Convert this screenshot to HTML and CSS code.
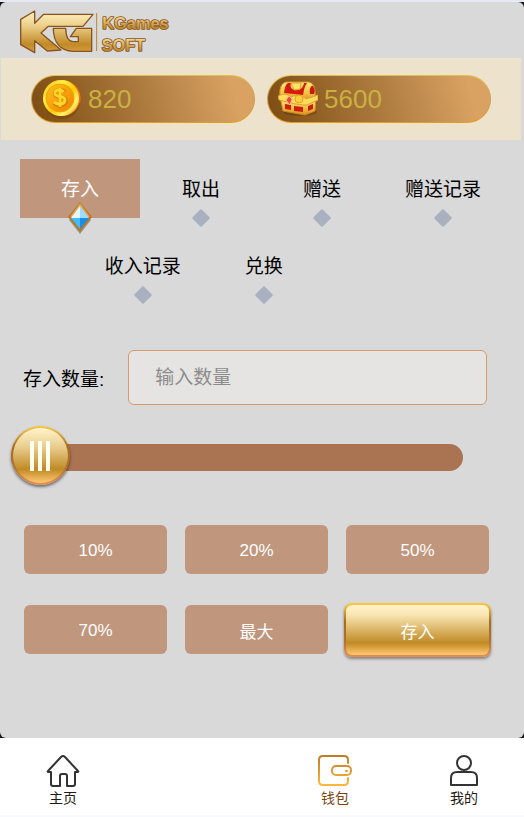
FILE: index.html
```
<!DOCTYPE html>
<html lang="zh-CN">
  <head>
    <meta charset="UTF-8" />
    <meta name="viewport" content="width=device-width, initial-scale=1.0" />
    <title>钱包</title>
    <link rel="stylesheet" href="styles.css">
  </head>
  <body>
    <div class="frame">
      <main class="wallet">
        <header class="header">
          <svg class="logo" viewBox="60 30 450 132" role="img" aria-label="KGames SOFT">
            <defs>
              <linearGradient id="gold" x1="0" y1="33" x2="0" y2="158" gradientUnits="userSpaceOnUse">
                <stop offset="0" stop-color="#fff2c4" />
                <stop offset="0.35" stop-color="#ecd08a" />
                <stop offset="0.8" stop-color="#c08a27" />
                <stop offset="1" stop-color="#d89e3e" />
              </linearGradient>
              <linearGradient id="goldText" x1="0" y1="0" x2="0" y2="1">
                <stop offset="0.2" stop-color="#f0d48c" />
                <stop offset="0.8" stop-color="#c08a2c" />
              </linearGradient>
            </defs>
            <g fill="url(#gold)" stroke="#8a5420" stroke-width="4" stroke-linejoin="round">
              <path d="M62 58 L104 33 V70 L131 43 H279 L249 79 H145 L123 99 L183 150 L142 153 L104 122 V158 L62 134 Z" />
              <path d="M160 85 H197 C198 110 205 125 219 125 H235 V110 H211 L229 85 H275 V154 H219 C180 152 160 126 160 85 Z" />
            </g>
            <path d="M290 39 V153" stroke="#b98432" stroke-width="3" />
            <g class="logo-text">
              <text x="307" y="86">KGames</text>
              <text x="305" y="152">SOFT</text>
            </g>
          </svg>
        </header>

        <section class="balances">
          <div class="balance">
            <svg class="balance-icon" viewBox="0 0 40 40" aria-hidden="true">
              <defs>
                <linearGradient id="coinRim" x1="0" y1="0" x2="1" y2="1">
                  <stop offset="0" stop-color="#ffb400" />
                  <stop offset="0.3" stop-color="#fff04a" />
                  <stop offset="0.55" stop-color="#ffcb00" />
                  <stop offset="0.75" stop-color="#fff36a" />
                  <stop offset="1" stop-color="#f58a00" />
                </linearGradient>
                <linearGradient id="coinFace" x1="0" y1="0" x2="1" y2="1">
                  <stop offset="0" stop-color="#ffc21a" />
                  <stop offset="1" stop-color="#ec8200" />
                </linearGradient>
              </defs>
              <ellipse cx="20" cy="22" rx="18" ry="18" fill="#6b3c08" opacity="0.4" />
              <circle cx="20" cy="19" r="18" fill="#f08000" />
              <path d="M33 8 A18 18 0 0 1 37 24" fill="none" stroke="#ff6a1a" stroke-width="2" />
              <circle cx="19" cy="19" r="18" fill="url(#coinRim)" />
              <circle cx="18" cy="19" r="14" fill="url(#coinFace)" stroke="#f5a100" />
              <path d="M23 13 C20 10 12 10 13 15 C14 20 24 16 24 22 C24 27 15 27 12 24 M18 9 V29" fill="none" stroke="#d97a00" stroke-width="4" />
              <path d="M22 13 C19 10 12 10 13 15 C14 19 23 16 23 21 C23 26 15 26 12 23 M18 9 V28" fill="none" stroke="#ffd62a" stroke-width="3" />
            </svg>
            <span>820</span>
          </div>
          <div class="balance">
            <svg class="balance-icon" viewBox="0 0 40 40" aria-hidden="true">
              <defs>
                <linearGradient id="chest" x1="0" y1="0" x2="0" y2="1">
                  <stop offset="0" stop-color="#ffeb7a" />
                  <stop offset="0.6" stop-color="#f6c043" />
                  <stop offset="1" stop-color="#dc8d18" />
                </linearGradient>
              </defs>
              <ellipse cx="22" cy="33" rx="17" ry="4" fill="#5a3206" opacity="0.4" />
              <path d="M2 18 L38 18 L37 32 L27 36 L5 32 Z" fill="url(#chest)" stroke="#c98a24" />
              <path d="M7 25 L13 26 V31 L7 30 Z M16 27 L25 28 V33 L16 32 Z M30 27 L35 25 V30 L30 32 Z" fill="#c9200e" />
              <path d="M2 18 C1 10 3 4 8 3 L31 3 C36 4 38 11 37 18 L28 22 Z" fill="url(#chest)" stroke="#c98a24" />
              <path d="M10 4 L13 4 C12 8 13 10 17 11 C22 12 25 9 26 4 L29 4 C26 8 26 12 25 16 L6 14 C7 9 7 6 10 4 Z" fill="#d41c0e" />
              <path d="M32 15 C31 10 33 6 35 7 C37 10 37 13 36 15 Z" fill="#c91a0e" />
              <path d="M13 4 L23 4 L22 10 L16 11 Z" fill="#ffe46a" stroke="#e0a02a" />
              <path d="M0 17 C7 14 9 15 13 18 C19 15 25 17 28 20 L40 16 V21 L29 26 C22 26 18 25 13 24 L1 21 Z" fill="#ffdc5c" stroke="#dba038" />
              <circle cx="21" cy="20" r="4" fill="#fbd03e" stroke="#e7a127" />
              <path d="M11 17 L14 20 L12 26 L8 21 Z" fill="#f04432" stroke="#ffb68a" />
            </svg>
            <span>5600</span>
          </div>
        </section>

        <nav class="tabs">
          <div class="tab-row">
            <button type="button" class="tab active">
              存入
              <svg class="gem" viewBox="0 0 24 32" aria-hidden="true">
                <path d="M12 6 L23 18 L12 32 L1 18 Z" fill="#000" opacity="0.3" />
                <path d="M12 0 L24 15 L12 30 L0 15 Z" fill="#b97820" />
                <path d="M12 1 L22 15 H2 Z" fill="#e0a650" />
                <path d="M12 4 L12 16 H3 Z" fill="#e4f6ff" />
                <path d="M12 4 L21 16 H12 Z" fill="#9edbff" />
                <path d="M3 16 H12 V27 Z" fill="#40bcfa" />
                <path d="M12 16 H21 L12 27 Z" fill="#188fe8" />
              </svg>
            </button>
            <button type="button" class="tab">取出</button>
            <button type="button" class="tab">赠送</button>
            <button type="button" class="tab">赠送记录</button>
          </div>
          <div class="tab-row second">
            <button type="button" class="tab">收入记录</button>
            <button type="button" class="tab">兑换</button>
          </div>
        </nav>

        <form class="deposit">
          <div class="amount-row">
            <label for="amount">存入数量:</label>
            <input type="text" id="amount" class="amount-input" placeholder="输入数量" />
          </div>
          <input type="range" id="slider" class="slider" min="0" max="100" value="0" aria-label="存入数量" />
          <div class="options">
            <button type="button" class="btn" data-percent="10">10%</button>
            <button type="button" class="btn" data-percent="20">20%</button>
            <button type="button" class="btn" data-percent="50">50%</button>
            <button type="button" class="btn" data-percent="70">70%</button>
            <button type="button" class="btn" data-percent="100">最大</button>
            <button type="submit" class="btn btn-submit">存入</button>
          </div>
        </form>
      </main>
    </div>

    <nav class="bottom-nav">
      <a href="#home" class="nav-item">
        <svg viewBox="0 0 36 36" aria-hidden="true">
          <path d="M3 18 L16 4 Q18 2 20 4 L33 18 Q34 19 32 19 H30 V31 Q30 33 28 33 H22 V23 Q22 21 20 21 H17 Q15 21 15 23 V33 H8 Q6 33 6 31 V19 H4 Q2 19 3 18 Z" />
        </svg>
        <span>主页</span>
      </a>
      <a href="#wallet" class="nav-item current">
        <svg viewBox="0 0 36 36" aria-hidden="true">
          <defs>
            <linearGradient id="walletLine" x1="0" y1="2" x2="0" y2="32" gradientUnits="userSpaceOnUse">
              <stop offset="0" stop-color="#bd7a28" />
              <stop offset="1" stop-color="#fdb83a" />
            </linearGradient>
          </defs>
          <path d="M31 10 V7 Q31 3 27 3 H6 Q2 3 2 7 V28 Q2 32 6 32 H27 Q31 32 31 28 V25" />
          <rect x="15" y="13" width="19" height="9" rx="4" />
          <path d="M29 18 H30" />
        </svg>
        <span>钱包</span>
      </a>
      <a href="#mine" class="nav-item">
        <svg viewBox="0 0 36 36" aria-hidden="true">
          <circle cx="18" cy="10" r="7" />
          <path d="M5 32 V25 Q5 19 11 19 H25 Q31 19 31 25 V32 Z" />
        </svg>
        <span>我的</span>
      </a>
    </nav>

    <script>
      const slider = document.getElementById("slider");
      const amount = document.getElementById("amount");
      const balance = 820;

      function setPercent(percent) {
        slider.value = percent;
        amount.value = Math.floor((balance * percent) / 100);
      }

      slider.addEventListener("input", () => setPercent(slider.value));

      document.querySelectorAll("[data-percent]").forEach((btn) => {
        btn.addEventListener("click", () => setPercent(btn.dataset.percent));
      });

      document.querySelector(".deposit").addEventListener("submit", (e) => {
        e.preventDefault();
      });
    </script>
  </body>
</html>
```
FILE: styles.css
```
* {
  box-sizing: border-box;
}

body {
  margin: 0;
  min-height: 100vh;
  display: flex;
  flex-direction: column;
  font-family: "Liberation Sans", "Noto Sans CJK SC", sans-serif;
  font-size: 19px;
  color: #000;
  background-color: #f8f9fd;
}

button,
input {
  font-family: inherit;
}

.frame {
  flex: 1;
  display: flex;
  border-top: 2px solid #e4e9f3;
  background-color: #18131a;
}

.wallet {
  flex: 1;
  min-width: 0;
  background-color: #d9d9d9;
  border-radius: 6px;
}

.header {
  height: 56px;
  padding: 8px 20px;
}

.logo {
  display: block;
  width: 150px;
  height: 44px;
}

.logo-text {
  font-size: 49px;
  font-weight: bold;
  fill: url(#goldText);
  stroke: #8a5420;
  stroke-width: 5px;
  stroke-linejoin: round;
  paint-order: stroke;
}

/* balances */
.balances {
  display: flex;
  gap: 12px;
  margin: 0 3px 0 1px;
  padding: 17px 30px;
  background-color: #ede2cb;
}

.balance {
  flex: 1;
  display: flex;
  align-items: center;
  gap: 6px;
  height: 48px;
  padding: 0 10px;
  border: 1px solid transparent;
  border-radius: 24px;
  background:
    linear-gradient(75deg, #7d4c12, #a8763a 45%, #d9a263 90%) padding-box,
    linear-gradient(#e3c04a, #c79a55 50%, #e8a014) border-box;
  color: #c9b141;
  font-size: 26px;
}

.balance-icon {
  width: 40px;
  height: 40px;
}

/* tabs */
.tabs {
  display: flex;
  flex-direction: column;
  gap: 18px;
  padding: 19px 21px 0 20px;
}

.tab-row {
  display: flex;
  gap: 1px;
}

.tab-row.second {
  padding-left: 13%;
}

.tab {
  position: relative;
  width: 25%;
  height: 59px;
  padding: 0 0 2px;
  border: none;
  background: none;
  color: #000;
  font-size: 19px;
  cursor: pointer;
}

.tab::after {
  content: "";
  position: absolute;
  left: 50%;
  bottom: 0;
  width: 13px;
  height: 13px;
  background-color: #a9b1c1;
  border-radius: 1px;
  transform: translate(-50%, 50%) rotate(45deg);
}

.tab-row.second .tab {
  width: 120px;
}

.tab.active {
  background-color: #c0967c;
  color: #fff;
}

.tab.active::after {
  display: none;
}

.gem {
  position: absolute;
  left: 50%;
  bottom: 0;
  width: 24px;
  height: 32px;
  transform: translate(-50%, 50%);
}

/* deposit form */
.deposit {
  padding: 55px 35px 0 23px;
}

.amount-row {
  display: flex;
  align-items: center;
  gap: 24px;
  padding-right: 2px;
}

.amount-input {
  flex: 1;
  min-width: 0;
  height: 55px;
  padding: 0 26px;
  border: 1px solid #d39b70;
  border-radius: 6px;
  background-color: #e5e4e2;
  font-size: 19px;
  outline: none;
}

.amount-input::placeholder {
  color: #8c8c8c;
}

.slider {
  -webkit-appearance: none;
  appearance: none;
  display: block;
  width: calc(100% - 14px);
  height: 60px;
  margin: 22px 0 0 -12px;
  background: none;
  cursor: pointer;
}

.slider::-webkit-slider-runnable-track {
  height: 27px;
  border-radius: 14px;
  background-color: #aa7453;
}

.slider::-webkit-slider-thumb {
  -webkit-appearance: none;
  width: 59px;
  height: 59px;
  margin-top: -18px;
  border: 2px solid transparent;
  border-radius: 50%;
  background:
    linear-gradient(#fffef0, #fffef0) 17px 13px / 4px 30px no-repeat padding-box,
    linear-gradient(#fffef0, #fffef0) 25px 13px / 4px 30px no-repeat padding-box,
    linear-gradient(#fffef0, #fffef0) 33px 13px / 4px 30px no-repeat padding-box,
    linear-gradient(#fff4cc, #e8cd8d 35%, #c08a24 75%, #ffc871) padding-box,
    linear-gradient(#ffc845, #a66c1c 35%, #b5702c 70%, #e58d55) border-box;
  box-shadow: 0 2px 3px rgba(0, 0, 0, 0.5);
}

.options {
  display: grid;
  grid-template-columns: repeat(3, 1fr);
  gap: 31px 18px;
  margin-top: 38px;
  padding-left: 1px;
}

.btn {
  height: 49px;
  padding: 2px 0 0;
  border: none;
  border-radius: 6px;
  background-color: #c0967c;
  color: #fff;
  font-size: 17px;
  cursor: pointer;
}

.btn-submit {
  height: 54px;
  margin: -2px;
  padding: 0;
  border: 2px solid transparent;
  border-radius: 8px;
  background:
    linear-gradient(#fff3ca, #f8e5b2 20%, #c08a24 76%, #ffc871) padding-box,
    linear-gradient(#ffc845, #a66c1c 35%, #b5702c 70%, #e58d55) border-box;
  box-shadow: 0 2px 3px rgba(0, 0, 0, 0.4);
}

/* bottom navigation */
.bottom-nav {
  display: flex;
  gap: 89px;
  height: 79px;
  padding: 15px 40px 0 43px;
  background-color: #fff;
  border-bottom: 2px solid #f8f9fd;
}

.nav-item {
  display: flex;
  flex-direction: column;
  align-items: center;
  width: 40px;
  color: #231815;
  font-size: 14px;
  line-height: 18px;
  text-decoration: none;
}

.nav-item svg {
  width: 36px;
  height: 36px;
  fill: none;
  stroke: #333;
  stroke-width: 2px;
  stroke-linecap: round;
  stroke-linejoin: round;
}

.nav-item.current {
  margin-left: auto;
  color: #7a430c;
}

.nav-item.current svg {
  stroke: url(#walletLine);
}
```
